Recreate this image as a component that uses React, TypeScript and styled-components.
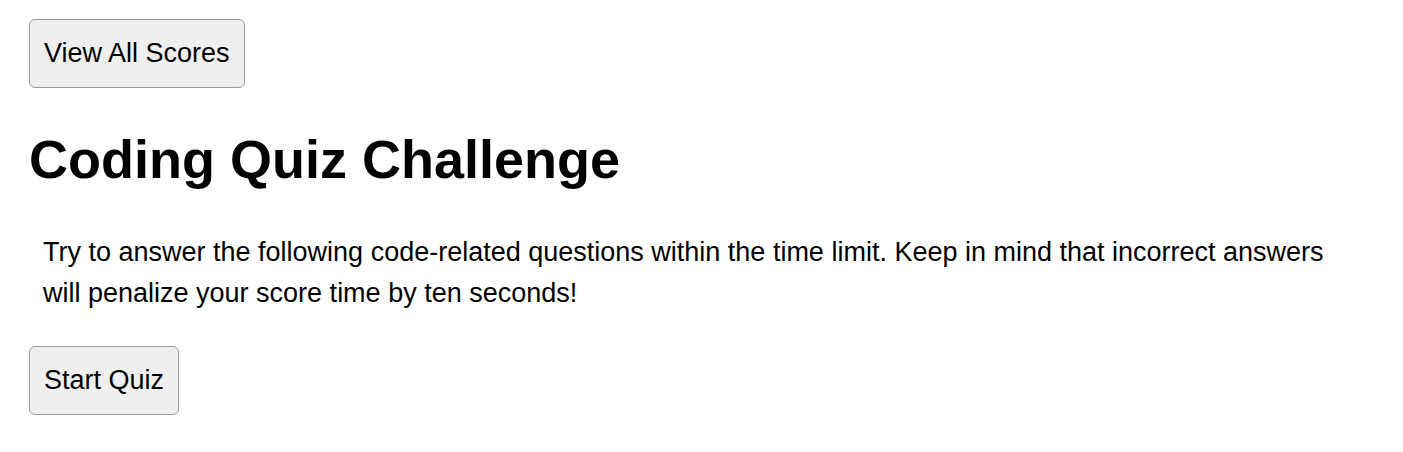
import React from "react";
import styled, { createGlobalStyle } from "styled-components";

const GlobalStyle = createGlobalStyle`
  html, body {
    margin: 0;
    padding: 0;
    background: #ffffff;
  }
  body {
    font-family: "Liberation Sans", Arial, Helvetica, sans-serif;
    color: #000000;
  }
`;

const Page = styled.main`
  display: flex;
  flex-direction: column;
  align-items: flex-start;
  padding: 19px 0 0 29px;
`;

const Button = styled.button`
  box-sizing: border-box;
  height: 69px;
  padding: 0 14px;
  font-family: "Liberation Sans", Arial, Helvetica, sans-serif;
  font-size: 27px;
  color: #000000;
  background: #efefef;
  border: 1.5px solid #9a9a9a;
  border-radius: 6px;
  cursor: pointer;
`;

const Title = styled.h1`
  margin: 40px 0 0 0;
  font-size: 54px;
  font-weight: 700;
  line-height: 62px;
`;

const Intro = styled.p`
  margin: 42px 0 32px 0;
  padding-left: 14px;
  width: 1300px;
  font-size: 27px;
  line-height: 41px;
`;

export default function App() {
  return (
    <>
      <GlobalStyle />
      <Page>
        <Button>View All Scores</Button>
        <Title>Coding Quiz Challenge</Title>
        <Intro>
          Try to answer the following code-related questions within the time
          limit. Keep in mind that incorrect answers will penalize your score
          time by ten seconds!
        </Intro>
        <Button>Start Quiz</Button>
      </Page>
    </>
  );
}
